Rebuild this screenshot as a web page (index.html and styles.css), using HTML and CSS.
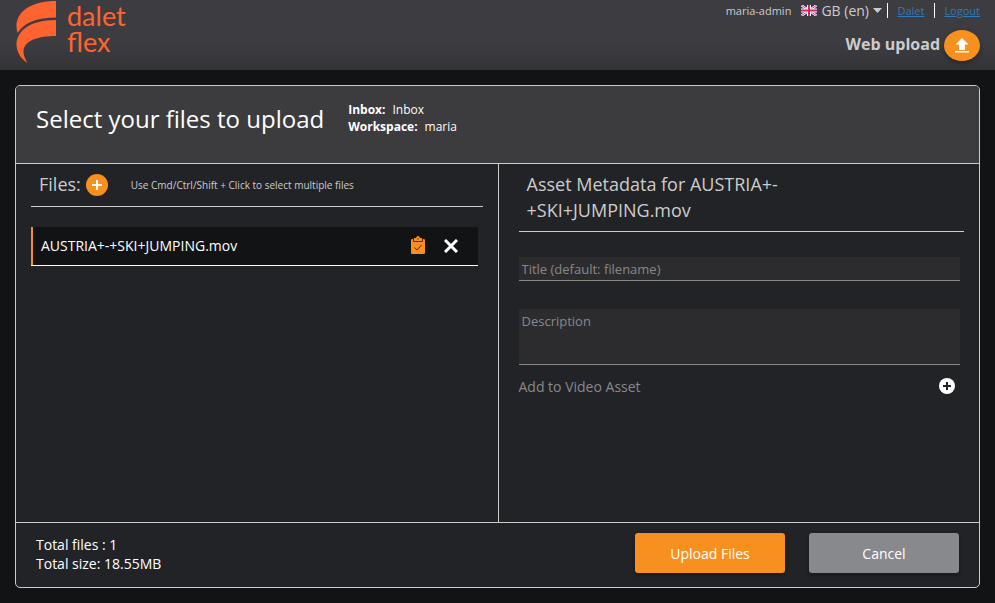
FILE: index.html
```html
<!DOCTYPE html>
<html lang="en-GB">
<head>
<meta charset="utf-8">
<meta name="viewport" content="width=device-width, initial-scale=1">
<title>Dalet Flex - Web upload</title>
<link rel="stylesheet" href="styles.css">
</head>
<body>
<header class="topbar">
  <div class="brand">
    <svg class="brand-mark" viewBox="0 0 42 64" aria-hidden="true">
      <path d="M41 1V17.500C22 17.500 10 22 2.500 33C-3 14 14 1 41 1Z"/>
      <path d="M41 20V36C19 36 0 43 12.500 63C-6 52-4 20 41 20Z"/>
    </svg>
    <div class="brand-name"><span>dalet</span><span>flex</span></div>
  </div>
  <div class="topbar-right">
    <nav class="account">
      <span class="user">maria-admin</span>
      <label class="language">
        <svg class="flag" viewBox="0 0 16 11" role="img" aria-label="Language">
          <path fill="#1b2f8f" d="M0 0h16v11H0z"/>
          <path stroke="#fff" stroke-width="2.400" d="M0 0l16 11M16 0L0 11"/>
          <path stroke="#e0315a" stroke-width="1" d="M0 0l16 11M16 0L0 11"/>
          <path stroke="#fff" stroke-width="4" d="M8 0v11M0 5.500h16"/>
          <path stroke="#e0234e" stroke-width="2" d="M8 0v11M0 5.500h16"/>
        </svg>
        <select class="language-select"><option>GB (en)</option></select>
        <svg class="caret" viewBox="0 0 9 5" aria-hidden="true"><path d="M0 0h9L4.500 5z"/></svg>
      </label>
      <a class="account-link" href="#dalet">Dalet</a>
      <a class="account-link" href="#logout">Logout</a>
    </nav>
    <div class="web-upload">
      <span>Web upload</span>
      <button class="upload-round" type="button" aria-label="Web upload">
        <svg viewBox="0 0 16 15" aria-hidden="true"><path d="M8 0l6.500 6.500H11V12H5V6.500H1.500zM1 13h14v1.500H1z"/></svg>
      </button>
    </div>
  </div>
</header>

<main class="panel">
  <div class="panel-header">
    <h1>Select your files to upload</h1>
    <dl class="target">
      <div><dt>Inbox:</dt><dd>Inbox</dd></div>
      <div><dt>Workspace:</dt><dd>maria</dd></div>
    </dl>
  </div>
  <div class="columns">
    <section class="files">
      <div class="files-header">
        <h2>Files:</h2>
        <button class="add-file" type="button" aria-label="Add files">
          <svg viewBox="0 0 22 22" aria-hidden="true"><path d="M11 6v10M6 11h10"/></svg>
        </button>
        <span class="hint">Use Cmd/Ctrl/Shift + Click to select multiple files</span>
      </div>
      <ul class="file-list">
        <li>
          <span class="file-name">AUSTRIA+-+SKI+JUMPING.mov</span>
          <button class="icon-button" type="button" aria-label="Edit metadata">
            <svg class="clipboard" viewBox="0 0 16 20" aria-hidden="true">
              <path fill="#f7901e" d="M2.500 3H4V2h2c.3-1.300 1-2 2-2s1.700.7 2 2h2v1h1.500C14.500 3 15 3.500 15 4.500v12c0 1-.5 1.500-1.500 1.500h-11C1.500 18 1 17.500 1 16.500v-12C1 3.500 1.500 3 2.500 3z"/>
              <path fill="none" stroke="#6b1f0a" d="M3.500 2.500v3h9v-3M4.500 11.500l2.500 2.500 4.500-5M8 2v1.500"/>
            </svg>
          </button>
          <button class="icon-button" type="button" aria-label="Remove file">
            <svg class="cross" viewBox="0 0 14 14" aria-hidden="true"><path d="M1 1l12 12M13 1L1 13"/></svg>
          </button>
        </li>
      </ul>
    </section>
    <section class="metadata">
      <div class="metadata-header"><h2>Asset Metadata for AUSTRIA+-+SKI+JUMPING.mov</h2></div>
      <form class="fields">
        <input class="field title-field" type="text" aria-label="Title" placeholder="Title (default: filename)">
        <textarea class="field description-field" aria-label="Description" placeholder="Description"></textarea>
        <div class="add-asset">
          <span>Add to Video Asset</span>
          <button class="icon-button" type="button" aria-label="Add to Video Asset">
            <svg class="plus-disc" viewBox="0 0 16 16" aria-hidden="true"><circle cx="8" cy="8" r="8" fill="#fff"/><path stroke="#222327" stroke-width="2" d="M8 4v8M4 8h8"/></svg>
          </button>
        </div>
      </form>
    </section>
  </div>
  <footer class="panel-footer">
    <div class="totals">
      <div>Total files : 1</div>
      <div>Total size: 18.55MB</div>
    </div>
    <div class="actions">
      <button class="action primary" type="button">Upload Files</button>
      <button class="action" type="button">Cancel</button>
    </div>
  </footer>
</main>
</body>
</html>
```
FILE: styles.css
```css
* { box-sizing: border-box; }

body {
  display: flex;
  flex-direction: column;
  min-height: 100vh;
  margin: 0;
  background: #121315;
  color: #fff;
  font-family: "Open Sans", sans-serif;
  font-size: 14px;
}

h1, h2, dl, dd, ul { margin: 0; padding: 0; font-weight: 400; }

button, input, textarea, select { font-family: inherit; }

button { padding: 0; border: 0; cursor: pointer; }

svg { display: block; }

.topbar {
  display: flex;
  justify-content: space-between;
  height: 70px;
  padding: 0 15px;
  background: linear-gradient(#3d3c40 60%, #343338);
  color: #ccc;
}

.brand { display: flex; gap: 10px; color: #ff6430; }
.brand-mark { width: 42px; height: 64px; fill: currentColor; }
.brand-name {
  display: flex;
  flex-direction: column;
  padding-top: 3px;
  font-family: Lato, sans-serif;
  font-size: 27px;
  line-height: 26px;
}

.topbar-right {
  display: flex;
  flex-direction: column;
  align-items: flex-end;
  gap: 9px;
}

.account { display: flex; align-items: center; height: 21px; font-size: 11px; }
.language { display: flex; align-items: center; margin: 0 5px 0 10px; }
.flag { width: 16px; height: 11px; margin-right: 4px; }
.language-select {
  padding: 0;
  border: 0;
  appearance: none;
  background: transparent;
  color: #ccc;
  font-size: 14px;
}
.caret { width: 9px; height: 5px; margin-left: 4px; fill: #ccc; }
.account-link {
  padding-left: 9px;
  border-left: 1px solid #fff;
  color: #337ab7;
  font-size: 11px;
  line-height: 15px;
}
.account-link + .account-link { margin-left: 10px; }

.web-upload { display: flex; align-items: center; gap: 4px; font-size: 16px; font-weight: 700; line-height: 22px; }
.web-upload span { padding-bottom: 3px; }
.upload-round {
  display: grid;
  place-items: center;
  width: 36px;
  height: 31px;
  border-radius: 50%;
  background: #f7901e;
  box-shadow: 0 2px 5px rgba(0, 0, 0, .3);
}
.upload-round svg { width: 16px; height: 15px; fill: #fff; }

.panel {
  display: flex;
  flex: 1;
  flex-direction: column;
  margin: 15px;
  border: 1px solid #ccc;
  border-radius: 5px;
  background: #222327;
  overflow: hidden;
}

.panel-header {
  display: flex;
  gap: 24px;
  padding: 15px 20px 26px;
  border-bottom: 1px solid #ccc;
  background: #3c3b3d;
}
.panel-header h1 { font-size: 24px; line-height: 36px; }
.target { font-size: 12px; line-height: 17px; }
.target div { display: flex; gap: 7px; }
.target dt { font-weight: 700; }

.columns { display: grid; flex: 1; grid-template-columns: calc(50% + 1px) 1fr; }

.files { padding: 0 15px; border-right: 1px solid #ccc; }
.files-header {
  display: flex;
  align-items: center;
  height: 43px;
  padding-left: 8px;
  border-bottom: 1px solid #ccc;
  color: #ccc;
}
h2 { font-size: 18px; line-height: 26px; }
.files-header h2 { padding-bottom: 2px; }
.add-file { width: 22px; height: 22px; margin: 0 23px 0 5px; border-radius: 50%; background: #f7901e; }
.add-file svg { width: 22px; height: 22px; stroke: #fff; stroke-width: 2; }
.hint { font-size: 10px; }

.file-list { margin: 20px 5px 0 0; list-style: none; }
.file-list li {
  display: flex;
  align-items: center;
  gap: 18px;
  height: 39px;
  padding: 0 20px 0 8px;
  border-bottom: 1px solid #fff;
  background: #121315;
  box-shadow: inset 2px 0 #f7901e;
}
.file-name { flex: 1; padding: 0 0 2px 2px; }
.icon-button { background: transparent; }
.clipboard { width: 16px; height: 20px; }
.cross { width: 14px; height: 14px; stroke: #fff; stroke-width: 3; }

.metadata { padding: 0 15px 0 20px; }
.metadata-header { padding: 7px 8px 8px; border-bottom: 1px solid #ccc; color: #ccc; }
.metadata-header h2 { max-width: 75%; }

.fields { display: flex; flex-direction: column; padding: 25px 4px 0 0; }
.field {
  width: 100%;
  padding: 0 3px;
  border: 0;
  border-bottom: 1px solid #888;
  border-radius: 0;
  background: #2c2c2e;
  color: #fff;
  font-size: 13px;
}
.field::placeholder { color: #888; opacity: 1; }
.title-field { height: 24px; }
.description-field { height: 56px; margin-top: 28px; padding-top: 3px; line-height: 18px; resize: none; }
.add-asset {
  display: flex;
  align-items: center;
  justify-content: space-between;
  height: 42px;
  padding-right: 5px;
  color: #888;
}
.plus-disc { width: 16px; height: 16px; }

.panel-footer {
  display: flex;
  align-items: center;
  justify-content: space-between;
  padding: 10px 20px 14px;
  border-top: 1px solid #ccc;
}
.totals { padding-top: 2px; line-height: 19px; }
.actions { display: flex; gap: 24px; }
.action {
  width: 150px;
  height: 40px;
  border-radius: 3px;
  background: #88898c;
  box-shadow: 0 2px 5px rgba(0, 0, 0, .3);
  color: #fff;
  font-size: 14px;
}
.action.primary { background: #f7901e; }
```
